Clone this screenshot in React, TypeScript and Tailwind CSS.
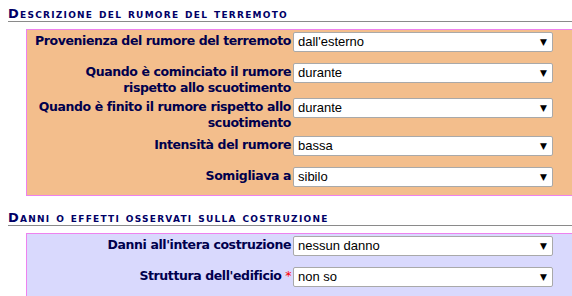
import React from "react";

type Row = { label: string; value: string; h: string; req?: boolean };

const rows1: Row[] = [
  { label: "Provenienza del rumore del terremoto", value: "dall'esterno", h: "h-[31px]" },
  { label: "Quando è cominciato il rumore rispetto allo scuotimento", value: "durante", h: "h-[35px]" },
  { label: "Quando è finito il rumore rispetto allo scuotimento", value: "durante", h: "h-[38px]" },
  { label: "Intensità del rumore", value: "bassa", h: "h-[31px]" },
  { label: "Somigliava a", value: "sibilo", h: "h-[30px]" },
];

const rows2: Row[] = [
  { label: "Danni all'intera costruzione", value: "nessun danno", h: "h-[31px]" },
  { label: "Struttura dell'edificio", value: "non so", h: "h-[31px]", req: true },
];

function Field({ row }: { row: Row }) {
  return (
    <div className={`flex items-start pt-[2px] ${row.h}`}>
      <div className="ml-[8px] w-[256px] shrink-0 pt-[1px] text-right text-[12.5px] leading-[16px] font-bold tracking-[-0.4px] text-[#00004d] [font-family:'DejaVu_Sans',Verdana,sans-serif]">
        {row.label}
        {row.req && <span className="text-[#ff0000] font-normal"> *</span>}
      </div>
      <div className="relative ml-[2px] w-[260px] shrink-0">
        <select
          defaultValue={row.value}
          className="block h-[20px] w-[260px] appearance-none rounded-[2px] border border-[#a9a9a9] bg-white pl-[4px] text-[13px] leading-[18px] text-black [font-family:'Liberation_Sans',Arial,sans-serif] outline-none"
        >
          <option value={row.value}>{row.value}</option>
        </select>
        <span className="pointer-events-none absolute right-[6px] top-[3px] text-[9px] leading-[14px] text-black [font-family:'DejaVu_Sans',sans-serif]">
          ▼
        </span>
      </div>
    </div>
  );
}

function Heading({ text, pt }: { text: string; pt: string }) {
  return (
    <div className={`ml-[8px] border-b border-[#8a8a8a] ${pt}`}>
      <div className="text-[13px] leading-[14px] font-bold tracking-[1.25px] text-[#000066] [font-variant:small-caps] [font-family:'DejaVu_Sans',Verdana,sans-serif]">
        {text}
      </div>
    </div>
  );
}

export default function App() {
  return (
    <div className="h-[296px] w-[572px] overflow-hidden bg-white">
      <Heading text="Descrizione del rumore del terremoto" pt="pt-[7px]" />
      <div className="ml-[26px] mt-[7px] border-y border-l border-[#ee82ee] bg-[#f3be8c]">
        {rows1.map((r, i) => (
          <Field key={i} row={r} />
        ))}
      </div>
      <Heading text="Danni o effetti osservati sulla costruzione" pt="pt-[15px]" />
      <div className="ml-[26px] mt-[7px] h-[80px] border-t border-l border-[#ee82ee] bg-[#d9d9fd]">
        {rows2.map((r, i) => (
          <Field key={i} row={r} />
        ))}
      </div>
    </div>
  );
}
